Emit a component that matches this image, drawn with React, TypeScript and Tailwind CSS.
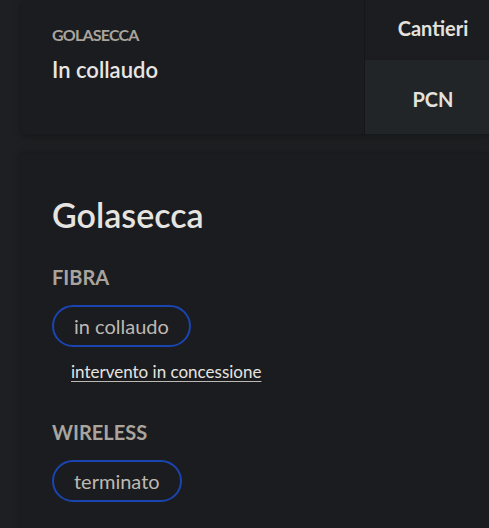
import React from 'react';

const font = { fontFamily: 'Lato, "Noto Sans", sans-serif' };

type Status = { label: string; note?: string };

const sections: { title: string; status: Status }[] = [
  { title: 'FIBRA', status: { label: 'in collaudo', note: 'intervento in concessione' } },
  { title: 'WIRELESS', status: { label: 'terminato' } },
];

export default function App() {
  return (
    <div className="h-[528px] w-[489px] overflow-hidden bg-[#1e1f22]" style={font}>
      {/* Summary card */}
      <div className="ml-[22px] flex h-[134px] bg-[#1b1c1f] shadow-[0_2px_8px_rgba(0,0,0,0.35)]">
        <div className="flex-1 pl-[30px] pt-[23px]">
          <div className="text-[16px] font-bold tracking-[-0.05em] text-[#a9a59e]">GOLASECCA</div>
          <div className="mt-[6px] text-[22px] font-semibold text-[#e8e6e3]">In collaudo</div>
        </div>
        <div className="flex w-[125px] flex-col border-l border-[#151618]">
          <div className="flex h-[56px] items-center justify-center bg-[#1c1d20] pl-[12px] text-[20px] font-bold text-[#e4e2de]">
            Cantieri
          </div>
          <div className="mt-[4px] flex flex-1 items-center justify-center bg-[#222527] pl-[12px] pt-[4px] text-[20px] font-bold text-[#e4e2de]">
            PCN
          </div>
        </div>
      </div>

      {/* Detail card */}
      <div className="ml-[20px] mt-[20px] h-[400px] bg-[#1b1c1f] pl-[32px] pt-[39px] shadow-[0_-1px_6px_rgba(0,0,0,0.3)]">
        <h1 className="text-[34px] font-semibold leading-[44px] text-[#e6e4e0]">Golasecca</h1>
        {sections.map((s, i) => (
          <div key={s.title} className={i === 0 ? 'mt-[28px]' : 'mt-[35px]'}>
            <h2 className="text-[20px] font-bold leading-[24px] text-[#a9a59e]">{s.title}</h2>
            <div className="mt-[16px] inline-flex h-[42px] items-center rounded-full border-2 border-[#1a45b0] px-[20px] text-[20px] text-[#bdb9b2]">
              {s.status.label}
            </div>
            {s.status.note && (
              <div className="ml-[19px] mt-[12px]">
                <a className="text-[17px] text-[#e6e4e0] underline decoration-[#bdb9b2] underline-offset-[3px]">
                  {s.status.note}
                </a>
              </div>
            )}
          </div>
        ))}
      </div>
    </div>
  );
}
